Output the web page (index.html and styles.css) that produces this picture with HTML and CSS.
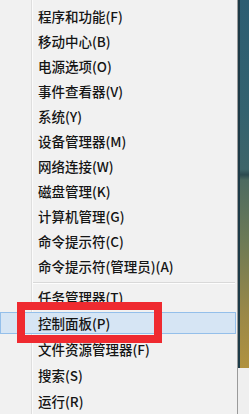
FILE: index.html
```html
<!DOCTYPE html>
<html lang="zh-CN">
<head>
<meta charset="utf-8">
<title>菜单</title>
<link rel="stylesheet" href="styles.css">
</head>
<body>
<div class="screen">
  <div class="menu">
    <div class="group">
      <div class="item">程序和功能(F)</div>
      <div class="item">移动中心(B)</div>
      <div class="item">电源选项(O)</div>
      <div class="item">事件查看器(V)</div>
      <div class="item">系统(Y)</div>
      <div class="item">设备管理器(M)</div>
      <div class="item">网络连接(W)</div>
      <div class="item">磁盘管理(K)</div>
      <div class="item">计算机管理(G)</div>
      <div class="item">命令提示符(C)</div>
      <div class="item">命令提示符(管理员)(A)</div>
    </div>
    <div class="sep"></div>
    <div class="group group-low">
      <div class="item">任务管理器(T)</div>
      <div class="item active">控制面板(P)</div>
      <div class="item">文件资源管理器(F)</div>
      <div class="item">搜索(S)</div>
      <div class="item">运行(R)</div>
    </div>
  </div>
  <div class="side">
    <div class="desktop"></div>
  </div>
  <div class="mark"></div>
</div>
</body>
</html>
```
FILE: styles.css
```css
* { box-sizing: border-box; }
html, body { margin: 0; padding: 0; }
body {
  width: 249px;
  height: 414px;
  overflow: hidden;
  background: #efefef;
  font-family: "Noto Sans CJK SC", "Liberation Sans", sans-serif;
}
.screen {
  position: relative;
  display: flex;
  width: 249px;
  height: 414px;
}
.menu {
  width: 238px;
  height: 414px;
  padding-top: 3px;
  background-color: #f1f1f1;
  background-image: linear-gradient(to right, transparent 31px, #dedede 31px, #dedede 32px, #fbfbfb 32px, #fbfbfb 33px, transparent 33px);
  border-right: 1px solid #9a9a9a;
}
.item {
  height: 25px;
  display: flex;
  align-items: center;
  padding-left: 38px;
  font-size: 13.5px;
  font-weight: 500;
  color: #151515;
  white-space: nowrap;
}
.group-low .item { height: 26px; }
.group-low .item.active {
  height: 22px;
  margin: 2px 1px 2px 0;
  padding-left: 37px;
  background: #d6e5f4;
  border: 1px solid #94bfea;
}
.sep {
  height: 2px;
  margin: 4px 2px 0 33px;
  border-top: 1px solid #d9d9d9;
  border-bottom: 1px solid #fdfdfd;
}
.side {
  flex: 1;
  display: flex;
  flex-direction: column;
}
.desktop {
  height: 368px;
  background: linear-gradient(to bottom, #2c5d72 0%, #33626f 30%, #3e6569 46%, #2c4b50 47.5%, #4d6b60 49%, #6c7a56 65%, #9a8848 85%, #b0923f 100%);
  box-shadow: inset 2px 0 0 #1d3b47;
}
.mark {
  position: absolute;
  left: 17px;
  top: 302px;
  width: 145px;
  height: 41px;
  border: 8px solid #ef2a30;
}
```
